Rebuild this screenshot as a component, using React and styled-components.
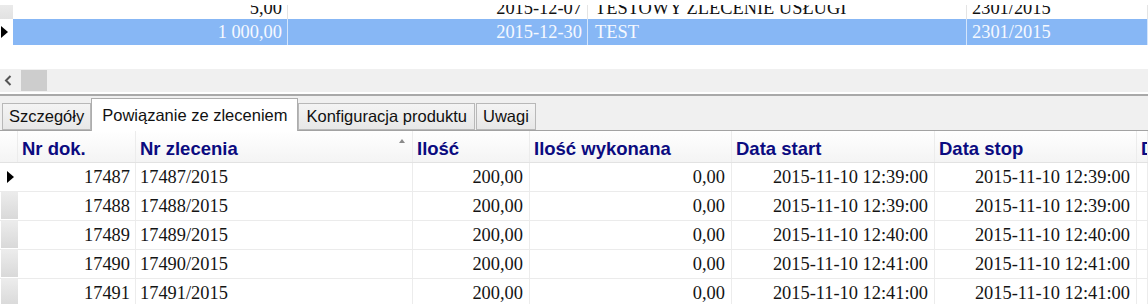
import React from "react";
import styled, { createGlobalStyle } from "styled-components";

const GlobalStyle = createGlobalStyle`
  html, body { margin: 0; padding: 0; background: #fff; }
  body {
    width: 1148px;
    height: 304px;
    overflow: hidden;
    font-family: "Liberation Sans", Arial, sans-serif;
  }
  * { box-sizing: border-box; }
`;

const Page = styled.div`
  display: flex;
  flex-direction: column;
  width: 1148px;
`;

/* ---------- upper grid ---------- */
const TopGrid = styled.div`
  margin-top: 5px;
  height: 40px;
  overflow: hidden;
  display: flex;
  flex-direction: column;
`;

const TopRow = styled.div`
  display: grid;
  grid-template-columns: 13px 275px 300px 379px 1fr;
  flex: none;
  height: ${(p) => p.$h}px;
  margin-top: ${(p) => p.$offset || 0}px;
  background: ${(p) => (p.$selected ? "#87b7f5" : "#fff")};
  color: ${(p) => (p.$selected ? "#f6f9ff" : "#111")};
`;

const TopCell = styled.div`
  display: flex;
  align-items: ${(p) => (p.$bottom ? "flex-end" : "center")};
  justify-content: ${(p) => (p.$right ? "flex-end" : "flex-start")};
  padding-left: ${(p) => (p.$right ? 0 : p.$pl || 7)}px;
  padding-right: ${(p) => (p.$right ? 5 : 0)}px;
  padding-bottom: 0;
  border-right: 1px solid ${(p) => (p.$selected ? "#d4e5fb" : "#e4e4e4")};
  font-family: "Liberation Serif", "Times New Roman", serif;
  font-size: 18.4px;
  line-height: 22px;
  white-space: nowrap;
  overflow: hidden;
`;

const TopIndicator = styled.div`
  display: flex;
  align-items: center;
  padding-left: 1px;
  background: ${(p) => (p.$active ? "#fff" : "linear-gradient(#f2f2f2, #e2e2e2)")};
`;

const Arrow = styled.svg`
  display: block;
  flex: none;
`;

const RowArrow = () => (
  <Arrow width="7" height="12" viewBox="0 0 7 12">
    <path d="M0 0 L7 6 L0 12 Z" fill="#000" />
  </Arrow>
);

/* ---------- scrollbar ---------- */
const ScrollBar = styled.div`
  margin-top: 24px;
  height: 23px;
  background: #f0f0f0;
  display: flex;
  align-items: center;
  padding-left: 4px;
  gap: 9px;
`;

const ScrollThumb = styled.div`
  width: 26px;
  height: 21px;
  background: #cdcdcd;
`;

/* ---------- tabs ---------- */
const TabStrip = styled.div`
  margin-top: 2px;
  border-top: 2px solid #a9a9a9;
  border-bottom: 1px solid #a3a3a3;
  height: 37px;
  background: #f0f0f0;
  display: flex;
  align-items: flex-end;
  padding-left: 2px;
`;

const Tab = styled.div`
  height: ${(p) => (p.$active ? 33 : 27)}px;
  margin-bottom: ${(p) => (p.$active ? -1 : 0)}px;
  margin-left: ${(p) => p.$gap || 0}px;
  padding: 0 ${(p) => p.$pad}px;
  display: flex;
  align-items: center;
  border: 1px solid ${(p) => (p.$active ? "#adadad" : "#b8b8b8")};
  border-bottom: ${(p) => (p.$active ? "none" : "1px solid #b8b8b8")};
  background: ${(p) => (p.$active ? "#fff" : "linear-gradient(#f4f4f4, #e7e7e7)")};
  font-family: "Liberation Sans", Arial, sans-serif;
  font-size: 16.5px;
  color: #111;
  white-space: nowrap;
  position: relative;
  z-index: ${(p) => (p.$active ? 1 : 0)};
`;

/* ---------- lower grid ---------- */
const COLS = "18px 118px 277px 117px 202px 203px 202px 1fr";

const HeaderRow = styled.div`
  display: grid;
  grid-template-columns: ${COLS};
  height: 32px;
  background: linear-gradient(#ffffff, #f4f4f4);
  border-bottom: 1px solid #e2e2e2;
`;

const HeaderCell = styled.div`
  display: flex;
  align-items: center;
  justify-content: space-between;
  padding: 5px 4px 0 4px;
  border-right: 1px solid #ececec;
  font-family: "Liberation Sans", Arial, sans-serif;
  font-weight: bold;
  font-size: 18.5px;
  color: #0b0b80;
  white-space: nowrap;
  overflow: hidden;
`;

const SortMark = styled.svg`
  align-self: flex-start;
  margin-top: 3px;
  margin-right: 3px;
  flex: none;
`;

const DataRow = styled.div`
  display: grid;
  grid-template-columns: ${COLS};
  height: 29px;
  border-bottom: 1px solid #ebebeb;
`;

const Indicator = styled.div`
  display: flex;
  align-items: center;
  padding-left: 6px;
  margin-left: 1px;
  border-bottom: 1px solid #fff;
  background: ${(p) => (p.$active ? "#fff" : "linear-gradient(#ececec, #d9d9d9)")};
`;

const Cell = styled.div`
  display: flex;
  align-items: center;
  justify-content: ${(p) => (p.$right ? "flex-end" : "flex-start")};
  padding: ${(p) => (p.$right ? `0 ${p.$pr || 6}px 0 0` : "0 0 0 4px")};
  border-right: 1px solid #ececec;
  font-family: "Liberation Serif", "Times New Roman", serif;
  font-size: 18.4px;
  color: #141414;
  white-space: nowrap;
  overflow: hidden;
`;

const rows = [
  { nr: 17487, start: "2015-11-10 12:39:00", stop: "2015-11-10 12:39:00" },
  { nr: 17488, start: "2015-11-10 12:39:00", stop: "2015-11-10 12:39:00" },
  { nr: 17489, start: "2015-11-10 12:40:00", stop: "2015-11-10 12:40:00" },
  { nr: 17490, start: "2015-11-10 12:41:00", stop: "2015-11-10 12:41:00" },
  { nr: 17491, start: "2015-11-10 12:41:00", stop: "2015-11-10 12:41:00" },
];

export default function App() {
  return (
    <>
      <GlobalStyle />
      <Page>
        <TopGrid>
          <TopRow $h={27} $offset={-13}>
            <TopIndicator />
            <TopCell $right $bottom>5,00</TopCell>
            <TopCell $right $bottom>2015-12-07</TopCell>
            <TopCell $bottom>TESTOWY ZLECENIE USŁUGI</TopCell>
            <TopCell $bottom $pl={5}>2301/2015</TopCell>
          </TopRow>
          <TopRow $h={26} $selected>
            <TopIndicator $active>
              <RowArrow />
            </TopIndicator>
            <TopCell $right $selected>1 000,00</TopCell>
            <TopCell $right $selected>2015-12-30</TopCell>
            <TopCell $selected>TEST</TopCell>
            <TopCell $selected $pl={5}>2301/2015</TopCell>
          </TopRow>
        </TopGrid>

        <ScrollBar>
          <Arrow width="8" height="11" viewBox="0 0 8 11">
            <path d="M6.5 1 L2 5.5 L6.5 10" fill="none" stroke="#555" strokeWidth="2" />
          </Arrow>
          <ScrollThumb />
        </ScrollBar>

        <TabStrip>
          <Tab $pad={6}>Szczegóły</Tab>
          <Tab $active $pad={10}>Powiązanie ze zleceniem</Tab>
          <Tab $pad={7}>Konfiguracja produktu</Tab>
          <Tab $pad={6} $gap={1}>Uwagi</Tab>
        </TabStrip>

        <HeaderRow>
          <HeaderCell />
          <HeaderCell>Nr dok.</HeaderCell>
          <HeaderCell>
            <span>Nr zlecenia</span>
            <SortMark width="6" height="4" viewBox="0 0 6 4">
              <path d="M0 4 L3 0 L6 4 Z" fill="#8a8a8a" />
            </SortMark>
          </HeaderCell>
          <HeaderCell>Ilość</HeaderCell>
          <HeaderCell>Ilość wykonana</HeaderCell>
          <HeaderCell>Data start</HeaderCell>
          <HeaderCell>Data stop</HeaderCell>
          <HeaderCell>D</HeaderCell>
        </HeaderRow>

        {rows.map((r, i) => (
          <DataRow key={r.nr}>
            <Indicator $active={i === 0}>{i === 0 && <RowArrow />}</Indicator>
            <Cell $right $pr={5}>{r.nr}</Cell>
            <Cell>{r.nr}/2015</Cell>
            <Cell $right>200,00</Cell>
            <Cell $right>0,00</Cell>
            <Cell $right>{r.start}</Cell>
            <Cell $right>{r.stop}</Cell>
            <Cell />
          </DataRow>
        ))}
      </Page>
    </>
  );
}
